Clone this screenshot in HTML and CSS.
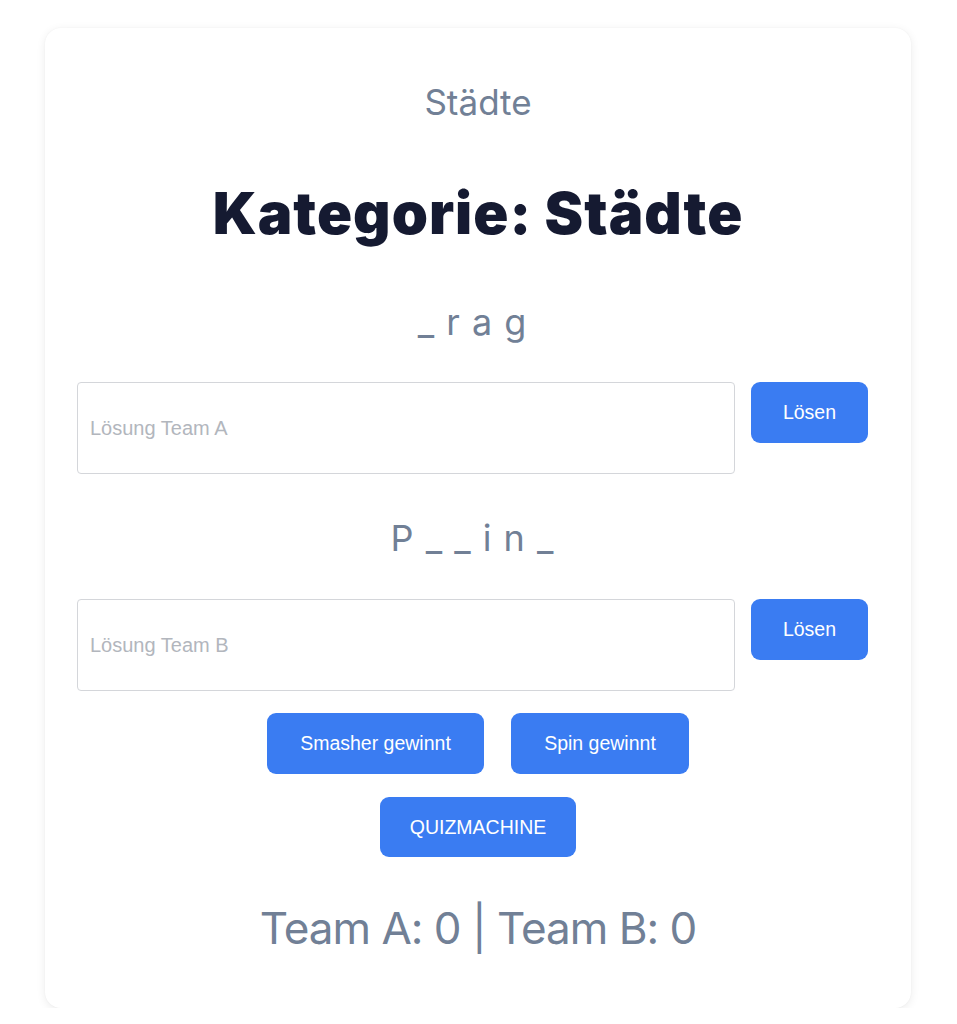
FILE: index.html
```html
<!DOCTYPE html>
<html lang="de">
<head>
<meta charset="utf-8">
<title>Quiz</title>
<link rel="stylesheet" href="styles.css">
</head>
<body>
<main class="card">
  <p class="category">Städte</p>
  <h1 class="heading">Kategorie: Städte</h1>

  <p class="puzzle puzzle-a">_ r a g</p>
  <div class="answer-row">
    <input class="answer" type="text" placeholder="Lösung Team A">
    <button class="btn btn-solve">Lösen</button>
  </div>

  <p class="puzzle puzzle-b">P _ _ i n _</p>
  <div class="answer-row">
    <input class="answer" type="text" placeholder="Lösung Team B">
    <button class="btn btn-solve">Lösen</button>
  </div>

  <div class="winner-row">
    <button class="btn btn-smasher">Smasher gewinnt</button>
    <button class="btn btn-spin">Spin gewinnt</button>
  </div>
  <div class="machine-row">
    <button class="btn btn-machine">QUIZMACHINE</button>
  </div>

  <p class="score">Team A: 0 | Team B: 0</p>
</main>
</body>
</html>
```

FILE: styles.css
```css
* { box-sizing: border-box; }

html, body {
  margin: 0;
  background: #ffffff;
}

body {
  padding: 28px 0 0 45px;
  font-family: Inter, "Noto Sans", sans-serif;
}

.card {
  width: 866px;
  background: #ffffff;
  border-radius: 16px;
  box-shadow: 0 2px 10px rgba(0, 0, 0, 0.08), 0 0 2px rgba(0, 0, 0, 0.04);
  padding: 54px 32px 52px 32px;
  display: flex;
  flex-direction: column;
}

.category {
  margin: 0;
  text-align: center;
  font-size: 35px;
  line-height: 40px;
  color: #718096;
  font-weight: 400;
}

.heading {
  margin: 57px 0 0 0;
  text-align: center;
  font-size: 58px;
  line-height: 68px;
  font-weight: 900;
  color: #151a31;
  letter-spacing: 1px;
}

.puzzle {
  margin: 0;
  padding-right: 11px;
  text-align: center;
  font-size: 36px;
  line-height: 44px;
  color: #718096;
  letter-spacing: 1px;
}

.puzzle-a { margin-top: 53px; }
.puzzle-b { margin-top: 42px; }

.answer-row {
  display: flex;
  align-items: flex-start;
  gap: 16px;
  margin-top: 38px;
}

.puzzle-b + .answer-row { margin-top: 39px; }

.answer {
  width: 658px;
  height: 92px;
  border: 1px solid #d4d6da;
  border-radius: 4px;
  padding: 0 12px;
  font-family: "Liberation Sans", Arial, sans-serif;
  font-size: 20px;
  color: #2d3748;
  outline: none;
}

.answer::placeholder {
  color: #b2b6bd;
}

.btn {
  border: none;
  background: #3a7cf2;
  color: #ffffff;
  font-family: "Liberation Sans", Arial, sans-serif;
  font-size: 19.5px;
  border-radius: 9px;
  height: 61px;
  padding: 0 32px;
  cursor: pointer;
}

.btn-solve {
  width: 117px;
  padding: 0;
}

.winner-row {
  display: flex;
  justify-content: center;
  gap: 27px;
  margin-top: 22px;
}

.btn-smasher { width: 217px; padding: 0; }
.btn-spin { width: 178px; padding: 0; }

.machine-row {
  display: flex;
  justify-content: center;
  margin-top: 23px;
}

.btn-machine { width: 196px; height: 60px; padding: 0; }

.score {
  margin: 43px 0 0 0;
  text-align: center;
  font-size: 44px;
  line-height: 56px;
  color: #718096;
  letter-spacing: -1px;
}
```
